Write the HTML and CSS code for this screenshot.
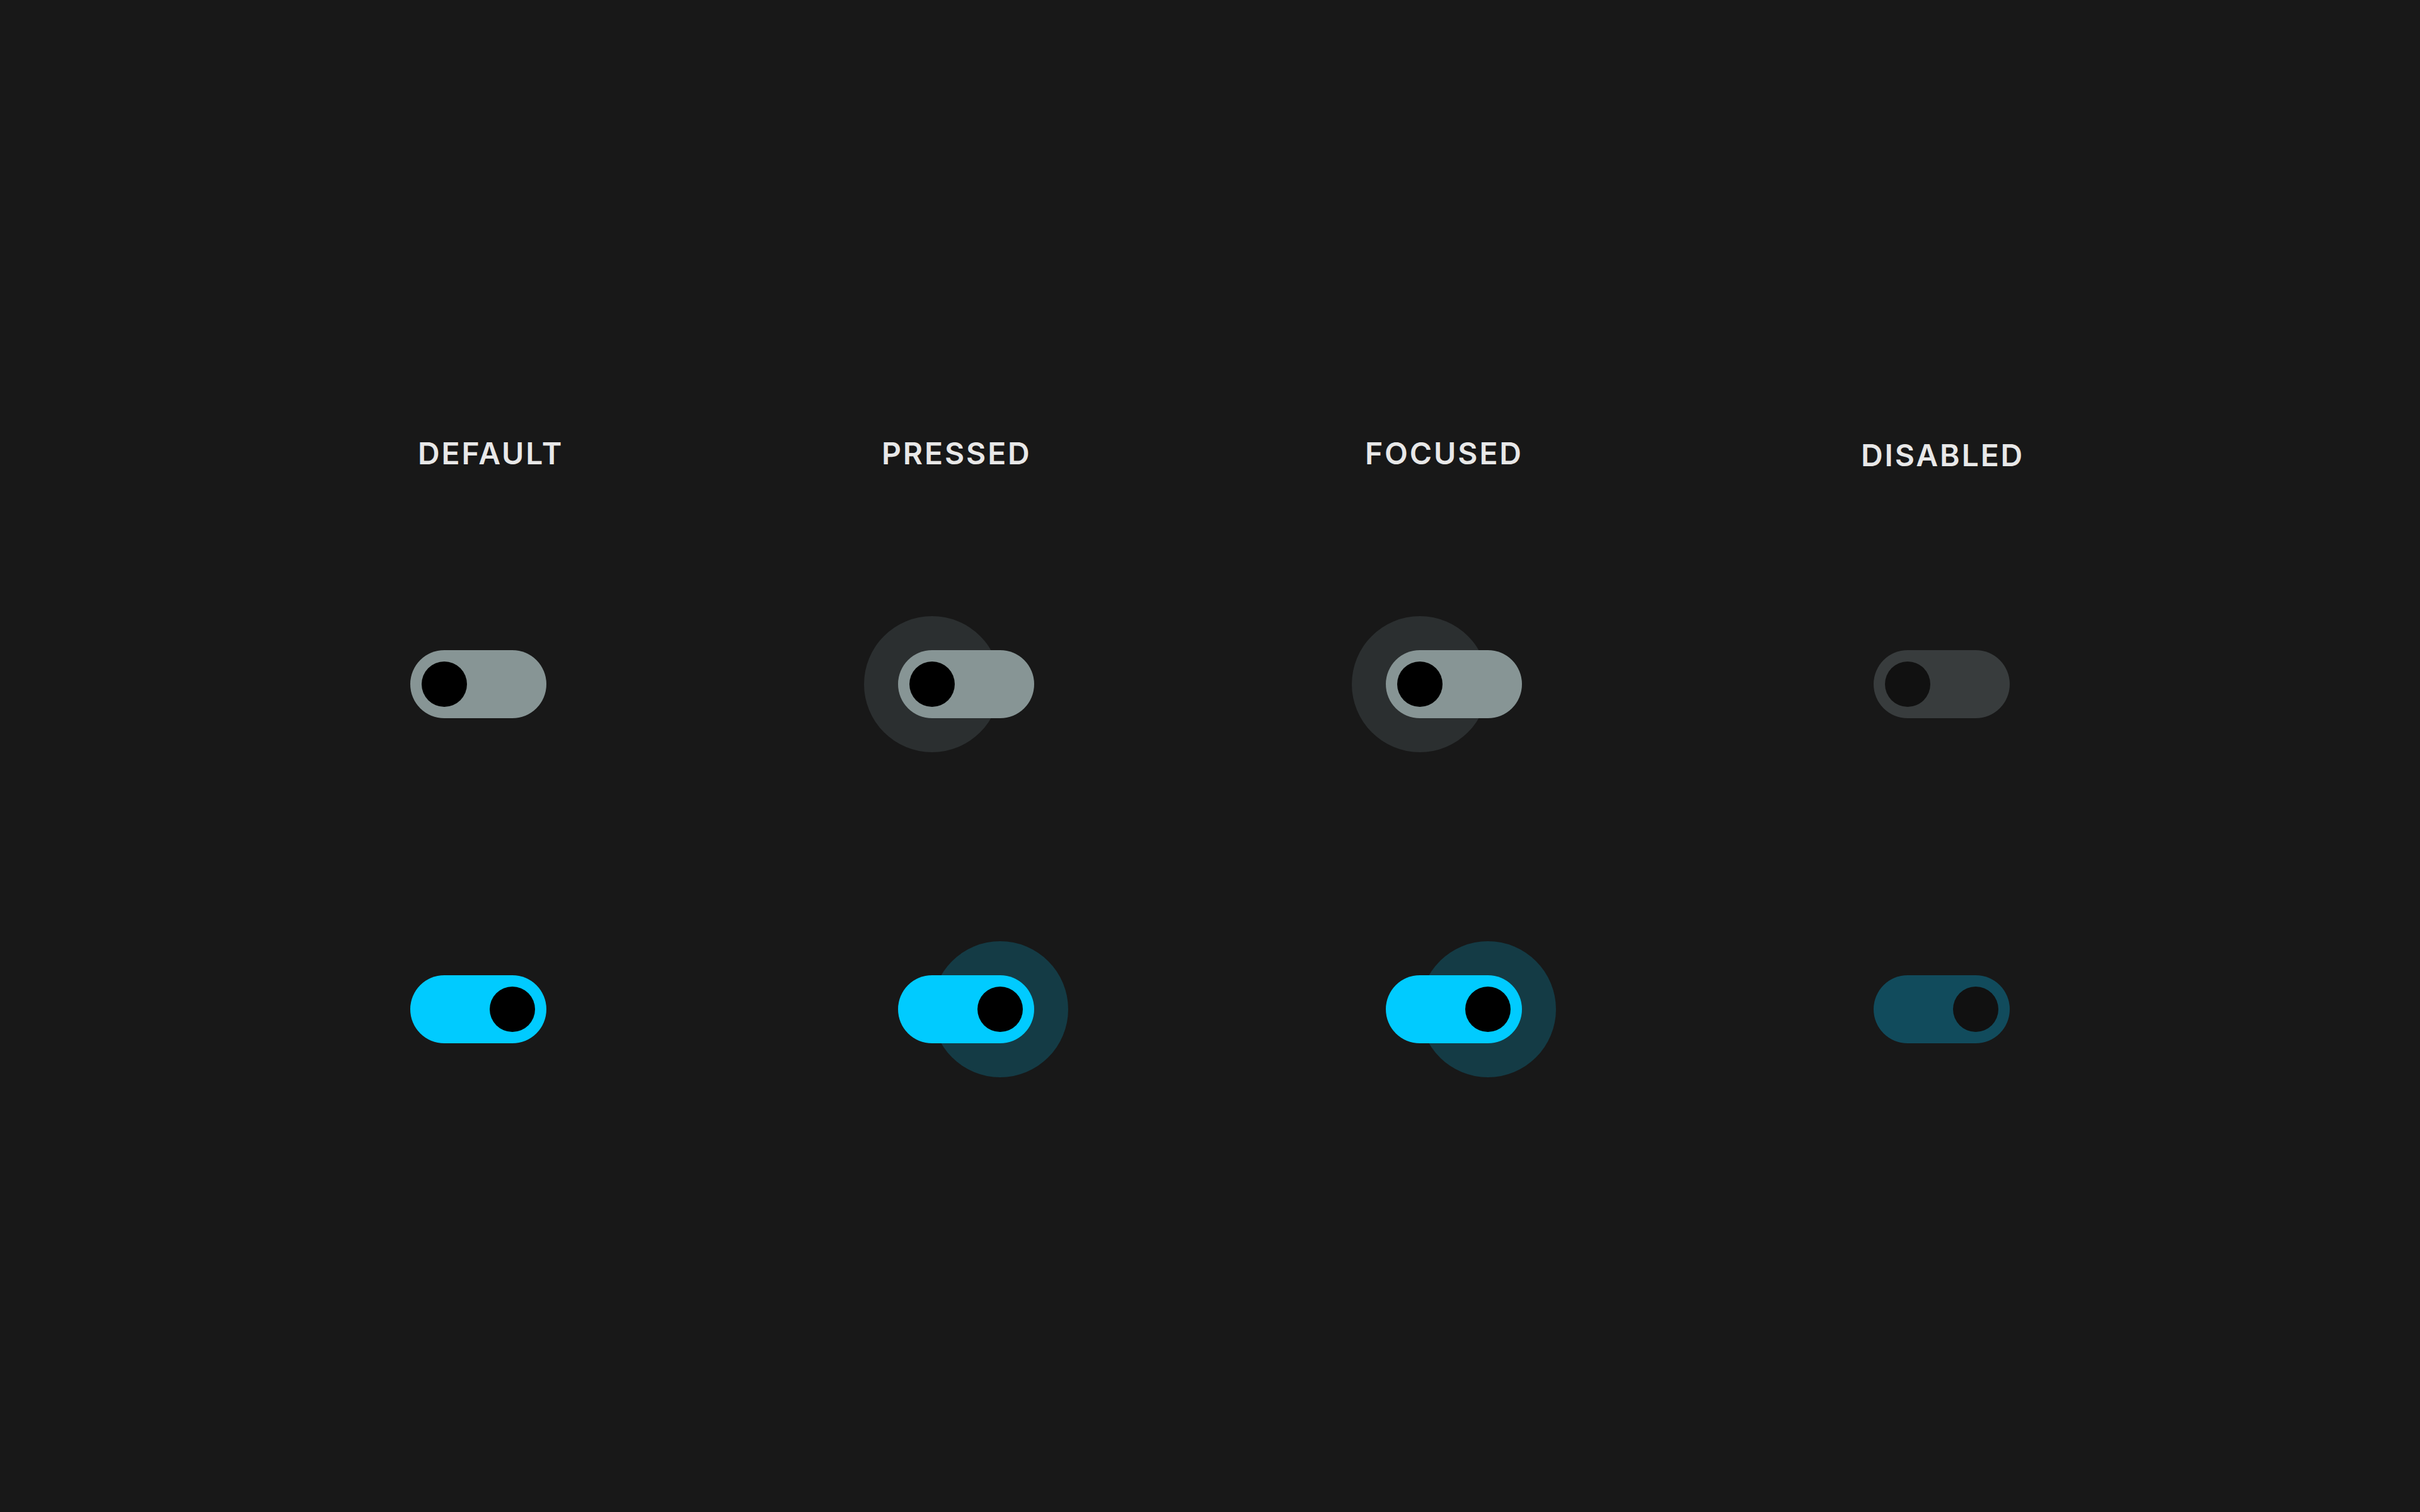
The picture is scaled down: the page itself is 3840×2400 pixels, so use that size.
FILE: index.html
```html
<!DOCTYPE html>
<html lang="en">
<head>
<meta charset="utf-8">
<title>Switch states</title>
<link rel="stylesheet" href="styles.css">
</head>
<body>
<main class="board">
  <div class="label label-default">DEFAULT</div>
  <div class="label label-pressed">PRESSED</div>
  <div class="label label-focused">FOCUSED</div>
  <div class="label label-disabled">DISABLED</div>

  <div class="switch off"><div class="track"><span class="thumb"></span></div></div>
  <div class="switch off has-halo"><span class="halo"></span><div class="track"><span class="thumb"></span></div></div>
  <div class="switch off has-halo"><span class="halo"></span><div class="track"><span class="thumb"></span></div></div>
  <div class="switch off disabled"><div class="track"><span class="thumb"></span></div></div>

  <div class="switch on row-on"><div class="track"><span class="thumb"></span></div></div>
  <div class="switch on row-on has-halo"><span class="halo"></span><div class="track"><span class="thumb"></span></div></div>
  <div class="switch on row-on has-halo"><span class="halo"></span><div class="track"><span class="thumb"></span></div></div>
  <div class="switch on row-on disabled"><div class="track"><span class="thumb"></span></div></div>
</main>
</body>
</html>
```

FILE: styles.css
```css
html, body {
  margin: 0;
  padding: 0;
  background: #181818;
}

body {
  width: 3840px;
  height: 2400px;
  overflow: hidden;
  font-family: Inter, "Noto Sans", "Liberation Sans", sans-serif;
}

.board {
  display: grid;
  grid-template-columns: repeat(4, 216px);
  grid-template-rows: 48px auto auto;
  column-gap: 558px;
  padding-left: 651px;
  padding-top: 696px;
}

.label {
  box-sizing: border-box;
  font-size: 48px;
  line-height: 48px;
  font-weight: 600;
  letter-spacing: 0.06em;
  color: #e8e8e8;
  white-space: nowrap;
  height: 48px;
}

.label-default { margin-left: 12px; }
.label-pressed { margin-left: -26px; }
.label-focused { margin-left: -33px; }
.label-disabled { margin-left: -20px; padding-top: 3px; }

.switch {
  position: relative;
  width: 216px;
  height: 108px;
  margin-top: 288px;
}

.switch.row-on {
  margin-top: 408px;
}

.track {
  position: relative;
  z-index: 1;
  box-sizing: border-box;
  width: 216px;
  height: 108px;
  padding: 18px;
  border-radius: 54px;
  display: flex;
  align-items: center;
  background: #879595;
}

.thumb {
  display: block;
  width: 72px;
  height: 72px;
  border-radius: 50%;
  background: #000;
}

.switch.on .track {
  justify-content: flex-end;
  background: #00cbff;
}

.halo {
  position: absolute;
  top: -54px;
  left: -54px;
  width: 216px;
  height: 216px;
  border-radius: 50%;
  background: #2b2f30;
  z-index: 0;
}

.switch.on .halo {
  left: 54px;
  background: #143b45;
}

.switch.disabled .track {
  background: #383c3d;
}

.switch.disabled .thumb {
  background: #111111;
}

.switch.on.disabled .track {
  background: #114b5c;
}
```
